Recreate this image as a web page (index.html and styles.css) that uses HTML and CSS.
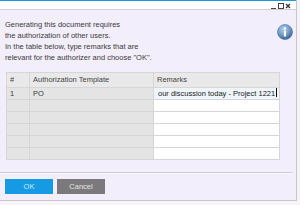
FILE: index.html
```html
<!DOCTYPE html>
<html>
<head>
<meta charset="utf-8">
<link rel="stylesheet" href="styles.css">
</head>
<body>
<div class="window">
  <div class="titlebar">
    <svg class="controls" width="20" height="8" viewBox="0 0 20 8">
      <rect x="0" y="6" width="5" height="1" fill="#444"/>
      <rect x="7.5" y="1.5" width="5" height="5" fill="none" stroke="#444" stroke-width="1"/>
      <path d="M15 2 L19 6 M19 2 L15 6" stroke="#333" stroke-width="1.3"/>
    </svg>
  </div>
  <div class="body">
    <div class="message">
      <div class="text">
        <div>Generating this document requires</div>
        <div>the authorization of other users.</div>
        <div>In the table below, type remarks that are</div>
        <div>relevant for the authorizer and choose "OK".</div>
      </div>
      <svg class="info" width="16" height="16" viewBox="0 0 16 16">
        <defs>
          <radialGradient id="g" cx="40%" cy="30%" r="70%">
            <stop offset="0" stop-color="#b4cfe9"/>
            <stop offset="0.6" stop-color="#6f98c6"/>
            <stop offset="1" stop-color="#3b6596"/>
          </radialGradient>
        </defs>
        <circle cx="8" cy="8" r="7.5" fill="url(#g)" stroke="#4a6f98" stroke-width="0.6"/>
        <circle cx="8" cy="4.4" r="1.2" fill="#fff"/>
        <rect x="6.9" y="6.4" width="2.2" height="6" rx="0.6" fill="#fff"/>
      </svg>
    </div>
    <table class="grid">
      <tr class="head">
        <td class="c1">#</td>
        <td class="c2">Authorization Template</td>
        <td class="c3">Remarks</td>
      </tr>
      <tr>
        <td class="c1">1</td>
        <td class="c2">PO</td>
        <td class="c3 edit"><span class="scroll">our discussion today - Project 1221</span><span class="caret"></span></td>
      </tr>
      <tr><td class="c1"></td><td class="c2"></td><td class="c3"></td></tr>
      <tr><td class="c1"></td><td class="c2"></td><td class="c3"></td></tr>
      <tr><td class="c1"></td><td class="c2"></td><td class="c3"></td></tr>
      <tr><td class="c1"></td><td class="c2"></td><td class="c3"></td></tr>
      <tr><td class="c1"></td><td class="c2"></td><td class="c3"></td></tr>
    </table>
    <div class="sep"></div>
    <div class="buttons">
      <div class="btn ok">OK</div>
      <div class="btn cancel">Cancel</div>
    </div>
  </div>
</div>
</body>
</html>
```

FILE: styles.css
```css
html, body {
  margin: 0;
  padding: 0;
}
body {
  width: 300px;
  height: 205px;
  background: #f6f4f9;
  font-family: "Liberation Sans", Arial, sans-serif;
  font-size: 7.5px;
  color: #3a3a3a;
  overflow: hidden;
}
.window {
  width: 296px;
  height: 200px;
  border-right: 1px solid #c9c6cf;
  border-bottom: 1px solid #c9c6cf;
  background: #f3eefb;
  display: flex;
  flex-direction: column;
}
.titlebar {
  height: 8px;
  border-top: 1px solid #1d99d8;
  border-bottom: 1px solid #cfcfd4;
  background: #fff;
  display: flex;
  justify-content: flex-end;
  align-items: flex-start;
  padding-right: 5px;
}
.controls {
  margin-top: 1px;
}
.body {
  flex: 1;
  display: flex;
  flex-direction: column;
}
.message {
  display: flex;
  justify-content: space-between;
  padding: 9px 3px 0 5px;
  height: 53px;
}
.text div {
  line-height: 11px;
  white-space: nowrap;
}
.info {
  margin-top: 5px;
}
.grid {
  border-collapse: collapse;
  margin-left: 6px;
  width: 274px;
  table-layout: fixed;
  border: 1px solid #cfcfcf;
}
.grid td {
  border: 1px solid #d6d6d6;
  height: 11px;
  padding: 0 0 0 3px;
  line-height: 11px;
  white-space: nowrap;
  overflow: hidden;
  background: #e4e4e4;
}
.grid .head td {
  height: 14px;
  line-height: 14px;
  background: #e9e9e9;
  color: #444;
}
.grid td.c3 {
  background: #fff;
}
.grid .head td.c3 {
  background: #e9e9e9;
}
.c1 { width: 19px; }
.c2 { width: 120px; }
.grid td.edit {
  background: #eef5fc;
  padding-left: 4px;
  color: #222;
}
.caret {
  display: inline-block;
  width: 1px;
  height: 9px;
  background: #111;
  vertical-align: -1px;
  margin-left: 1px;
}
.sep {
  margin-top: 12px;
  width: 293px;
  height: 1px;
  background: #cdcbd3;
  border-bottom: 1px solid #faf8fd;
}
.buttons {
  display: flex;
  gap: 4px;
  padding: 5px 0 0 5px;
}
.btn {
  width: 48px;
  height: 15px;
  line-height: 15px;
  text-align: center;
  font-size: 7.5px;
}
.ok {
  background: #169ae4;
  color: #cfe9fb;
}
.cancel {
  background: #7b797c;
  color: #e3e3e3;
}
```
